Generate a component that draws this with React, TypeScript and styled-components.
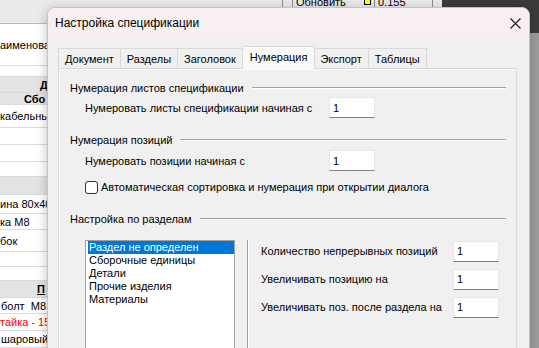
import React from "react";
import styled, { createGlobalStyle } from "styled-components";

const Global = createGlobalStyle`
  html, body { margin: 0; padding: 0; }
  body {
    width: 539px;
    height: 348px;
    overflow: hidden;
    background: #ffffff;
    font-family: "Liberation Sans", Arial, sans-serif;
  }
`;

const Screen = styled.div`
  position: relative;
  width: 539px;
  height: 348px;
  overflow: hidden;
  display: flex;
`;

/* ---------- background application ---------- */

const AppWindow = styled.div`
  width: 442px;
  display: flex;
  flex-direction: column;
  background: #ffffff;
  font-size: 11px;
  color: #000;
`;

const Toolbar = styled.div`
  height: 24px;
  box-sizing: border-box;
  background: #ebebeb;
  border-bottom: 1px solid #b9b9b9;
  display: flex;
  align-items: flex-start;
  padding-left: 282px;
`;

const ToolCell = styled.div<{ $w: number }>`
  width: ${(p) => p.$w}px;
  height: 16px;
  margin-top: -6px;
  box-sizing: border-box;
  border-left: 1px solid #8c8c8c;
  display: flex;
  align-items: center;
  gap: 4px;
  padding-left: 3px;
  line-height: 14px;
  white-space: nowrap;
`;

const YellowMark = styled.span`
  width: 5px;
  height: 9px;
  margin-left: 14px;
  margin-top: -6px;
  background: #ffff00;
  border: 1px solid #000;
`;

const TableRow = styled.div<{ $h: number; $band?: boolean }>`
  height: ${(p) => p.$h}px;
  box-sizing: border-box;
  background: ${(p) => (p.$band ? "#e4e4e4" : "#ffffff")};
  border-bottom: 1px solid #dadada;
  display: flex;
  align-items: center;
  white-space: pre;
  overflow: hidden;
`;

const CellText = styled.span<{ $indent?: number; $bold?: boolean; $red?: boolean }>`
  padding-left: ${(p) => p.$indent ?? 0}px;
  font-weight: ${(p) => (p.$bold ? 700 : 400)};
  text-decoration: ${(p) => (p.$bold ? "underline" : "none")};
  color: ${(p) => (p.$red ? "#ff0000" : "#000")};
`;

const RightPane = styled.div`
  flex: 1;
  display: flex;
  flex-direction: column;
`;

const DarkBar = styled.div`
  height: 33px;
  background: #3b3b3b;
`;

const GreyFill = styled.div`
  flex: 1;
  background: linear-gradient(90deg, #b1b1b1 0%, #a6a6a6 85%, #9c9c9c 100%);
`;

/* ---------- dialog ---------- */

const Dialog = styled.div`
  position: absolute;
  left: 47px;
  top: 7px;
  width: 483px;
  height: 360px;
  box-sizing: border-box;
  border: 1px solid #c4c4c4;
  border-radius: 8px 8px 0 0;
  overflow: hidden;
  background: #f0f0f0;
  box-shadow: 0 2px 12px rgba(0, 0, 0, 0.25);
  display: flex;
  flex-direction: column;
`;

const TitleBar = styled.div`
  height: 30px;
  flex: none;
  background: #f8eff0;
  display: flex;
  align-items: center;
  justify-content: space-between;
  padding-left: 7px;
  font-size: 12px;
  color: #000;
`;

const CloseButton = styled.div`
  width: 44px;
  height: 30px;
  display: flex;
  align-items: center;
  justify-content: center;
  margin-right: -8px;
`;

const Body = styled.div`
  flex: 1;
  display: flex;
  flex-direction: column;
  padding: 8px 12px 0 10px;
  font-size: 11px;
  color: #000;
`;

const TabRow = styled.div`
  height: 22px;
  display: flex;
  align-items: flex-end;
  position: relative;
  z-index: 1;
`;

const Tab = styled.div<{ $active?: boolean }>`
  height: ${(p) => (p.$active ? 23 : 20)}px;
  box-sizing: border-box;
  padding: 0 ${(p) => (p.$active ? 7 : 6)}px;
  margin: 0 ${(p) => (p.$active ? -1 : 0)}px;
  margin-bottom: ${(p) => (p.$active ? -1 : 0)}px;
  border: 1px solid #d9d9d9;
  border-bottom: none;
  border-left-width: ${(p) => (p.$active ? 1 : 0)}px;
  background: ${(p) => (p.$active ? "#f9f9f9" : "#f0f0f0")};
  display: flex;
  align-items: center;
  padding-bottom: ${(p) => (p.$active ? 2 : 0)}px;
  white-space: nowrap;
  position: relative;
  z-index: ${(p) => (p.$active ? 2 : 1)};
  &:first-child {
    border-left-width: 1px;
  }
`;

const Panel = styled.div`
  flex: 1;
  border: 1px solid #d9d9d9;
  box-shadow: inset 1px 1px 0 #fbfbfb;
  background: #f0f0f0;
  padding: 12px 10px 0 11px;
  display: flex;
  flex-direction: column;
`;

const GroupHeader = styled.div<{ $gap: number }>`
  margin-top: ${(p) => p.$gap}px;
  height: 14px;
  display: flex;
  align-items: center;
  gap: 8px;
  white-space: nowrap;
  &::after {
    content: "";
    flex: 1;
    height: 0;
    border-top: 1px solid #a0a0a0;
    border-bottom: 1px solid #ffffff;
  }
`;

const FieldRow = styled.div<{ $gap: number }>`
  margin-top: ${(p) => p.$gap}px;
  padding-left: 15px;
  display: grid;
  grid-template-columns: 244px 46px;
  align-items: center;
`;

const Field = styled.input`
  width: 46px;
  height: 21px;
  box-sizing: border-box;
  margin: 0;
  padding: 0 3px;
  background: #ffffff;
  border: 1px solid #e6e6e6;
  border-bottom: 1px solid #808080;
  font-family: "Liberation Sans", Arial, sans-serif;
  font-size: 11px;
  color: #000;
  outline: none;
`;

const CheckRow = styled.label`
  margin-top: 9px;
  padding-left: 15px;
  height: 14px;
  display: flex;
  align-items: center;
  gap: 3px;
  white-space: nowrap;
`;

const CheckBox = styled.span`
  width: 13px;
  height: 13px;
  box-sizing: border-box;
  border: 1px solid #333333;
  border-radius: 3px;
  background: #ffffff;
`;

const Section = styled.div`
  margin-top: 14px;
  padding-left: 15px;
  display: flex;
  align-items: flex-start;
  flex: 1;
`;

const ListBox = styled.div`
  width: 150px;
  height: 140px;
  box-sizing: border-box;
  border: 1px solid #a0a0a0;
  background: #ffffff;
  padding: 0 0 0 2px;
`;

const ListItem = styled.div<{ $selected?: boolean }>`
  height: 13px;
  line-height: 13px;
  padding-left: 1px;
  white-space: nowrap;
  background: ${(p) => (p.$selected ? "#0078d7" : "transparent")};
  color: ${(p) => (p.$selected ? "#ffffff" : "#000000")};
`;

const Separator = styled.div`
  width: 1px;
  height: 140px;
  margin-left: 12px;
  background: #a0a0a0;
  border-right: 1px solid #ffffff;
`;

const SideGrid = styled.div`
  margin-left: 12px;
  display: grid;
  grid-template-columns: 192px 46px;
  grid-auto-rows: 22px;
  row-gap: 6px;
  align-items: center;
  white-space: nowrap;
`;

const tabs = ["Документ", "Разделы", "Заголовок", "Нумерация", "Экспорт", "Таблицы"];
const sections = [
  "Раздел не определен",
  "Сборочные единицы",
  "Детали",
  "Прочие изделия",
  "Материалы",
];
const sideFields = [
  "Количество непрерывных позиций",
  "Увеличивать позицию на",
  "Увеличивать поз. после раздела на",
];

type Row = { h: number; band?: boolean; text?: string; indent?: number; bold?: boolean; red?: boolean };

const rows: Row[] = [
  { h: 42, text: "аименова" },
  { h: 11 },
  { h: 16, band: true, text: "Д", indent: 40, bold: true },
  { h: 12, band: true, text: "Сбо", indent: 24, bold: true },
  { h: 23, text: "кабельны" },
  { h: 17 },
  { h: 17 },
  { h: 15 },
  { h: 18, band: true },
  { h: 19, text: "ина 80x40" },
  { h: 16, text: "ка M8" },
  { h: 22, text: "бок" },
  { h: 15 },
  { h: 14 },
  { h: 17, band: true, text: "П", indent: 37, bold: true },
  { h: 16, text: "болт  M8", indent: 1 },
  { h: 17, text: "тайка - 15", red: true },
  { h: 17, text: "шаровый Ф", indent: 1 },
];

export default function App() {
  return (
    <>
      <Global />
      <Screen>
        <AppWindow>
          <Toolbar>
            <ToolCell $w={10} />
            <ToolCell $w={82}>
              Обновить
              <YellowMark />
            </ToolCell>
            <ToolCell $w={58}>0.155</ToolCell>
            <ToolCell $w={10} />
          </Toolbar>
          {rows.map((r, i) => (
            <TableRow key={i} $h={r.h} $band={r.band}>
              {r.text && (
                <CellText $indent={r.indent} $bold={r.bold} $red={r.red}>
                  {r.text}
                </CellText>
              )}
            </TableRow>
          ))}
        </AppWindow>
        <RightPane>
          <DarkBar />
          <GreyFill />
        </RightPane>

        <Dialog>
          <TitleBar>
            Настройка спецификации
            <CloseButton>
              <svg width="11" height="11" viewBox="0 0 11 11">
                <path d="M0.5 0.5 L10.5 10.5 M10.5 0.5 L0.5 10.5" stroke="#1a1a1a" strokeWidth="1.1" fill="none" />
              </svg>
            </CloseButton>
          </TitleBar>
          <Body>
            <TabRow>
              {tabs.map((t) => (
                <Tab key={t} $active={t === "Нумерация"}>
                  {t}
                </Tab>
              ))}
            </TabRow>
            <Panel>
              <GroupHeader $gap={0}>Нумерация листов спецификации</GroupHeader>
              <FieldRow $gap={2}>
                <span>Нумеровать листы спецификации начиная с</span>
                <Field readOnly value="1" />
              </FieldRow>
              <GroupHeader $gap={15}>Нумерация позиций</GroupHeader>
              <FieldRow $gap={3}>
                <span>Нумеровать позиции начиная с</span>
                <Field readOnly value="1" />
              </FieldRow>
              <CheckRow>
                <CheckBox />
                Автоматическая сортировка и нумерация при открытии диалога
              </CheckRow>
              <GroupHeader $gap={18}>Настройка по разделам</GroupHeader>
              <Section>
                <ListBox>
                  {sections.map((s, i) => (
                    <ListItem key={s} $selected={i === 0}>
                      {s}
                    </ListItem>
                  ))}
                </ListBox>
                <Separator />
                <SideGrid>
                  {sideFields.map((f) => (
                    <React.Fragment key={f}>
                      <span>{f}</span>
                      <Field readOnly value="1" />
                    </React.Fragment>
                  ))}
                </SideGrid>
              </Section>
            </Panel>
          </Body>
        </Dialog>
      </Screen>
    </>
  );
}
